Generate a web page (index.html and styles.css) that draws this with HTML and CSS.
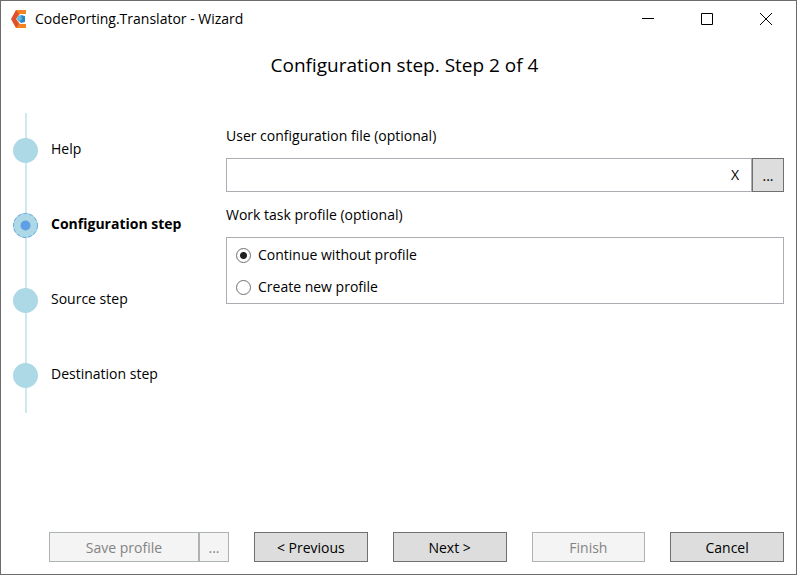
FILE: index.html
```html
<!DOCTYPE html>
<html lang="en">
<head>
<meta charset="utf-8">
<title>CodePorting.Translator - Wizard</title>
<link rel="stylesheet" href="styles.css">
</head>
<body>
<div class="window">
  <header class="titlebar">
    <svg class="logo" viewBox="0 0 16 18" aria-hidden="true">
      <path d="M5 0H15V4H9L5 9L9 14H15V18H5L3 9Z" fill="#f58220"/>
      <path d="M5 0L8 4L5 9L8 14L5 18L0 9Z" fill="#e0502a"/>
      <path d="M10 5L14 6V12L10 13L6 9Z" fill="#2f84c4"/>
      <path d="M10 5L11 9L8 12L6 9L7 6Z" fill="#55bdea"/>
    </svg>
    <span class="caption">CodePorting.Translator - Wizard</span>
    <div class="window-buttons">
      <button type="button" class="window-button" aria-label="Minimize"><svg viewBox="0 0 12 12"><path d="M0 5.500H12"/></svg></button>
      <button type="button" class="window-button" aria-label="Maximize"><svg viewBox="0 0 12 12"><path d="M.5 .5H11.500V11.500H.5Z"/></svg></button>
      <button type="button" class="window-button" aria-label="Close"><svg viewBox="0 0 12 12"><path d="M0 0L12 12M12 0L0 12"/></svg></button>
    </div>
  </header>
  <h1 class="heading">Configuration step. Step 2 of 4</h1>
  <div class="body">
    <ol class="steps">
      <li class="step"><span class="dot"></span><span class="step-name">Help</span></li>
      <li class="step current" aria-current="step">
        <svg class="dot" viewBox="0 0 25 25" aria-hidden="true">
          <circle class="ring" cx="12.500" cy="12.500" r="12"/>
          <circle class="core" cx="12.500" cy="12.500" r="5"/>
        </svg>
        <span class="step-name">Configuration step</span>
      </li>
      <li class="step"><span class="dot"></span><span class="step-name">Source step</span></li>
      <li class="step"><span class="dot"></span><span class="step-name">Destination step</span></li>
    </ol>
    <main class="form">
      <label class="field-label" for="config">User configuration file (optional)</label>
      <div class="file-row">
        <div class="file-box">
          <input class="file-input" id="config" type="text">
          <button type="button" class="clear" aria-label="Clear">X</button>
        </div>
        <button type="button" class="button" aria-label="Browse">...</button>
      </div>
      <div class="field-label" id="profile-label">Work task profile (optional)</div>
      <div class="options" role="radiogroup" aria-labelledby="profile-label">
        <label class="option"><input type="radio" name="profile" checked>Continue without profile</label>
        <label class="option"><input type="radio" name="profile">Create new profile</label>
      </div>
    </main>
  </div>
  <footer class="footer">
    <div class="save-group">
      <button type="button" class="button" disabled>Save profile</button>
      <button type="button" class="button" aria-label="More save options" disabled>...</button>
    </div>
    <button type="button" class="button">&lt; Previous</button>
    <button type="button" class="button">Next &gt;</button>
    <button type="button" class="button" disabled>Finish</button>
    <button type="button" class="button">Cancel</button>
  </footer>
</div>
</body>
</html>
```
FILE: styles.css
```css
* {
  box-sizing: border-box;
}

body {
  margin: 0;
  background: #fff;
  color: #000;
  font: 14px/20px "Open Sans", "Noto Sans", sans-serif;
}

button,
input {
  margin: 0;
  font: inherit;
  color: inherit;
}

.window {
  display: flex;
  flex-direction: column;
  min-height: 100vh;
  border: 1px solid #6d6b6d;
}

.titlebar {
  display: flex;
  align-items: center;
  height: 36px;
  padding: 0 1px 0 10px;
}

.logo {
  width: 16px;
  height: 18px;
}

.caption {
  margin-left: 8px;
}

.window-buttons {
  display: flex;
  align-self: stretch;
  margin-left: auto;
}

.window-button {
  display: grid;
  place-items: center;
  width: 59px;
  padding: 0;
  border: 0;
  background: none;
}

.window-button svg {
  width: 12px;
  height: 12px;
  fill: none;
  stroke: #000;
}

.heading {
  margin: 14px 12px 0 24px;
  font-size: 19px;
  font-weight: 400;
  line-height: 28px;
  text-align: center;
}

.body {
  display: flex;
  flex: 1;
  padding: 34px 12px 0;
}

.steps {
  flex: none;
  width: 213px;
  margin: 0;
  padding: 0;
  list-style: none;
}

.step {
  display: flex;
  align-items: center;
  gap: 13px;
  height: 75px;
  background: linear-gradient(#cde8ef, #cde8ef) 12px 0 / 2px 100% no-repeat;
}

.dot {
  width: 25px;
  height: 25px;
  border-radius: 50%;
  background: #add8e6;
}

.step-name {
  padding-bottom: 4px;
}

.current {
  font-weight: 700;
}

.ring {
  fill: none;
  stroke: #5f9fe3;
  stroke-dasharray: 4 2;
}

.core {
  fill: #5f9fe3;
}

.form {
  flex: 1;
  padding-top: 13px;
}

.field-label {
  display: block;
  margin-bottom: 12px;
}

.file-row {
  display: flex;
  height: 34px;
  margin-bottom: 13px;
}

.file-box {
  display: flex;
  flex: 1;
  border: 1px solid #abadb3;
}

.file-input {
  flex: 1;
  min-width: 0;
  padding: 0 8px;
  border: 0;
  outline: 0;
}

.clear {
  width: 32px;
  padding: 0;
  border: 0;
  background: none;
}

.button {
  min-width: 32px;
  padding: 1px 0 0;
  border: 1px solid #707070;
  background: #ddd;
}

.button:disabled {
  border-color: #adb2b5;
  background: #f4f4f4;
  color: #838383;
}

.options {
  padding: 1px 9px 0;
  border: 1px solid #abadb3;
}

.option {
  display: flex;
  align-items: center;
  gap: 7px;
  height: 32px;
}

.option input {
  appearance: none;
  width: 15px;
  height: 15px;
  border: 1px solid #707070;
  border-radius: 50%;
}

.option input:checked {
  background: radial-gradient(circle, #212121 3px, transparent 4px);
}

.footer {
  display: grid;
  grid-template-columns: 180px repeat(4, 1fr);
  grid-auto-rows: 30px;
  gap: 25px;
  padding: 0 12px 12px 48px;
}

.save-group {
  display: grid;
  grid-template-columns: 1fr 30px;
}

.save-group .button {
  min-width: 0;
}
```
